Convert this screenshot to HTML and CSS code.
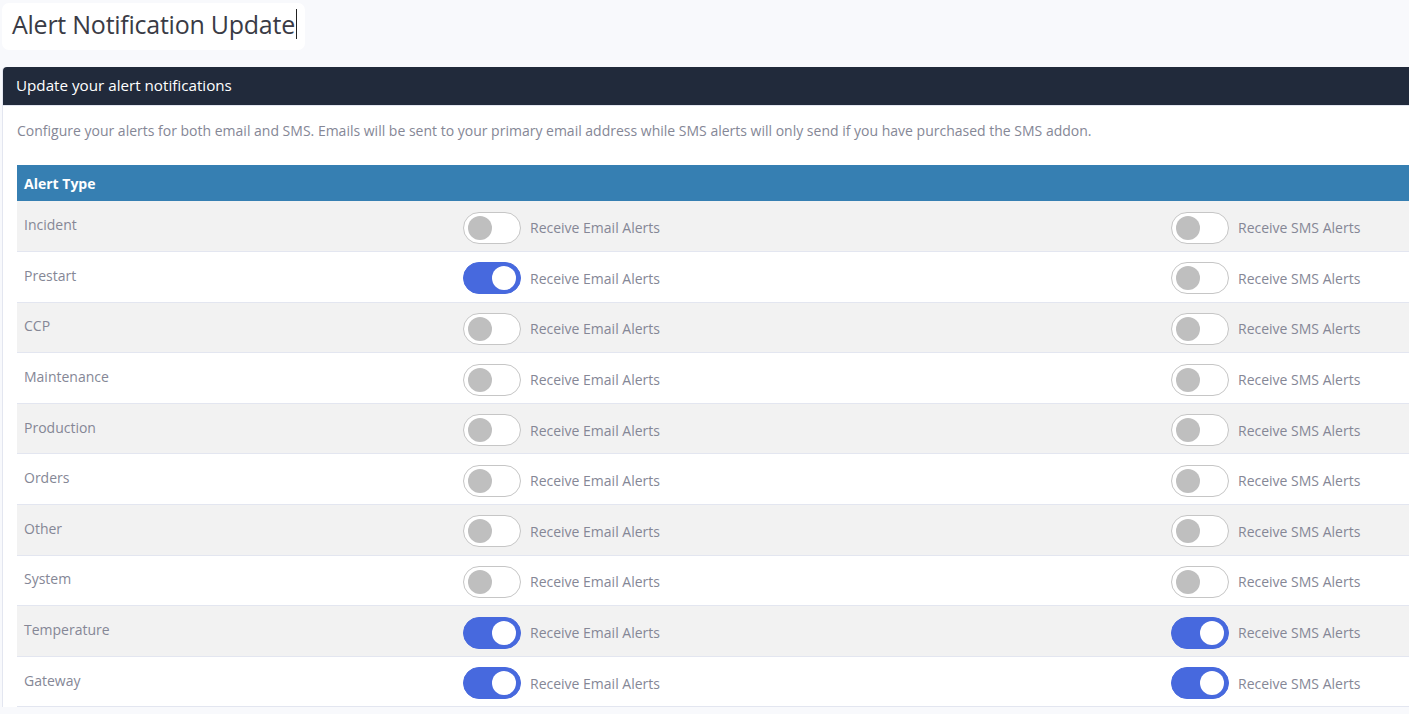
FILE: index.html
```
<!DOCTYPE html>
<html>
<head>
<meta charset="utf-8">
<link rel="stylesheet" href="styles.css">
</head>
<body>
<div class="page">
  <div class="title-box"><span class="title-text">Alert Notification Update</span><span class="caret"></span></div>
  <div class="card">
    <div class="card-header">Update your alert notifications</div>
    <div class="card-body">
      <p class="desc">Configure your alerts for both email and SMS. Emails will be sent to your primary email address while SMS alerts will only send if you have purchased the SMS addon.</p>
      <table class="alerts">
        <thead>
          <tr><th class="c1">Alert Type</th><th class="c2"></th><th class="c3"></th></tr>
        </thead>
        <tbody>
          <tr><td class="name">Incident</td><td><label class="sw"><span class="tg"></span><span class="lbl">Receive Email Alerts</span></label></td><td><label class="sw"><span class="tg"></span><span class="lbl">Receive SMS Alerts</span></label></td></tr>
          <tr><td class="name">Prestart</td><td><label class="sw"><span class="tg on"></span><span class="lbl">Receive Email Alerts</span></label></td><td><label class="sw"><span class="tg"></span><span class="lbl">Receive SMS Alerts</span></label></td></tr>
          <tr><td class="name">CCP</td><td><label class="sw"><span class="tg"></span><span class="lbl">Receive Email Alerts</span></label></td><td><label class="sw"><span class="tg"></span><span class="lbl">Receive SMS Alerts</span></label></td></tr>
          <tr><td class="name">Maintenance</td><td><label class="sw"><span class="tg"></span><span class="lbl">Receive Email Alerts</span></label></td><td><label class="sw"><span class="tg"></span><span class="lbl">Receive SMS Alerts</span></label></td></tr>
          <tr><td class="name">Production</td><td><label class="sw"><span class="tg"></span><span class="lbl">Receive Email Alerts</span></label></td><td><label class="sw"><span class="tg"></span><span class="lbl">Receive SMS Alerts</span></label></td></tr>
          <tr><td class="name">Orders</td><td><label class="sw"><span class="tg"></span><span class="lbl">Receive Email Alerts</span></label></td><td><label class="sw"><span class="tg"></span><span class="lbl">Receive SMS Alerts</span></label></td></tr>
          <tr><td class="name">Other</td><td><label class="sw"><span class="tg"></span><span class="lbl">Receive Email Alerts</span></label></td><td><label class="sw"><span class="tg"></span><span class="lbl">Receive SMS Alerts</span></label></td></tr>
          <tr><td class="name">System</td><td><label class="sw"><span class="tg"></span><span class="lbl">Receive Email Alerts</span></label></td><td><label class="sw"><span class="tg"></span><span class="lbl">Receive SMS Alerts</span></label></td></tr>
          <tr><td class="name">Temperature</td><td><label class="sw"><span class="tg on"></span><span class="lbl">Receive Email Alerts</span></label></td><td><label class="sw"><span class="tg on"></span><span class="lbl">Receive SMS Alerts</span></label></td></tr>
          <tr><td class="name">Gateway</td><td><label class="sw"><span class="tg on"></span><span class="lbl">Receive Email Alerts</span></label></td><td><label class="sw"><span class="tg on"></span><span class="lbl">Receive SMS Alerts</span></label></td></tr>
        </tbody>
      </table>
    </div>
  </div>
</div>
</body>
</html>
```
FILE: styles.css
```
html, body {
  margin: 0;
  padding: 0;
  overflow: hidden;
}
body {
  background: #f8f9fc;
  font-family: "Open Sans", "Noto Sans", sans-serif;
  color: #858796;
}
.page {
  padding: 3px 0 0 2px;
  width: 1700px;
}
.title-box {
  display: inline-flex;
  align-items: center;
  height: 47px;
  width: 303px;
  box-sizing: border-box;
  padding: 0 0 5px 10px;
  background: #fff;
  border-radius: 7px;
}
.title-text {
  font-size: 25px;
  color: #3a3b45;
  letter-spacing: -0.25px;
}
.caret {
  display: inline-block;
  width: 1px;
  height: 30px;
  background: #222;
  margin-left: 1px;
}
.card {
  margin-top: 17px;
  background: #fff;
  border-left: 1px solid #e3e6f0;
  border-radius: 4px 0 0 0;
}
.card-header {
  background: #212a3b;
  color: #fff;
  font-size: 15.2px;
  height: 38px;
  line-height: 37px;
  padding-left: 13px;
  border-radius: 4px 0 0 0;
  border-bottom: 1px solid #e3e6f0;
}
.card-body {
  padding: 13px 0 0 14px;
}
.desc {
  margin: 0 0 22px 0;
  font-size: 14px;
  line-height: 24px;
}
.alerts {
  border-collapse: collapse;
  width: 1600px;
  table-layout: fixed;
}
.alerts th {
  background: #367fb2;
  color: #fff;
  text-align: left;
  font-size: 14px;
  font-weight: 700;
  height: 36px;
  padding: 0 0 0 7px;
}
.c1 { width: 432px; }
.c2 { width: 701px; }
.alerts tbody tr {
  height: 50.6px;
}
.alerts td {
  padding: 0 0 0 7px;
  border-bottom: 1px solid #e3e6f0;
  vertical-align: middle;
}
.alerts tbody tr:nth-child(odd) td {
  background: #f2f2f2;
}
.alerts td.name {
  font-size: 14px;
  padding-bottom: 3px;
}
.sw {
  display: flex;
  align-items: center;
  gap: 9px;
  padding-top: 3px;
}
.tg {
  position: relative;
  display: block;
  width: 58px;
  height: 32px;
  box-sizing: border-box;
  border: 1px solid #c6c6c6;
  border-radius: 16px;
  background: #fff;
  flex: none;
}
.tg::after {
  content: "";
  position: absolute;
  top: 3px;
  left: 4px;
  width: 24px;
  height: 24px;
  border-radius: 50%;
  background: #bfbfbf;
}
.tg.on {
  background: #4769de;
  border-color: #4769de;
}
.tg.on::after {
  left: auto;
  right: 4px;
  background: #fff;
}
.lbl {
  font-size: 14px;
}
```
